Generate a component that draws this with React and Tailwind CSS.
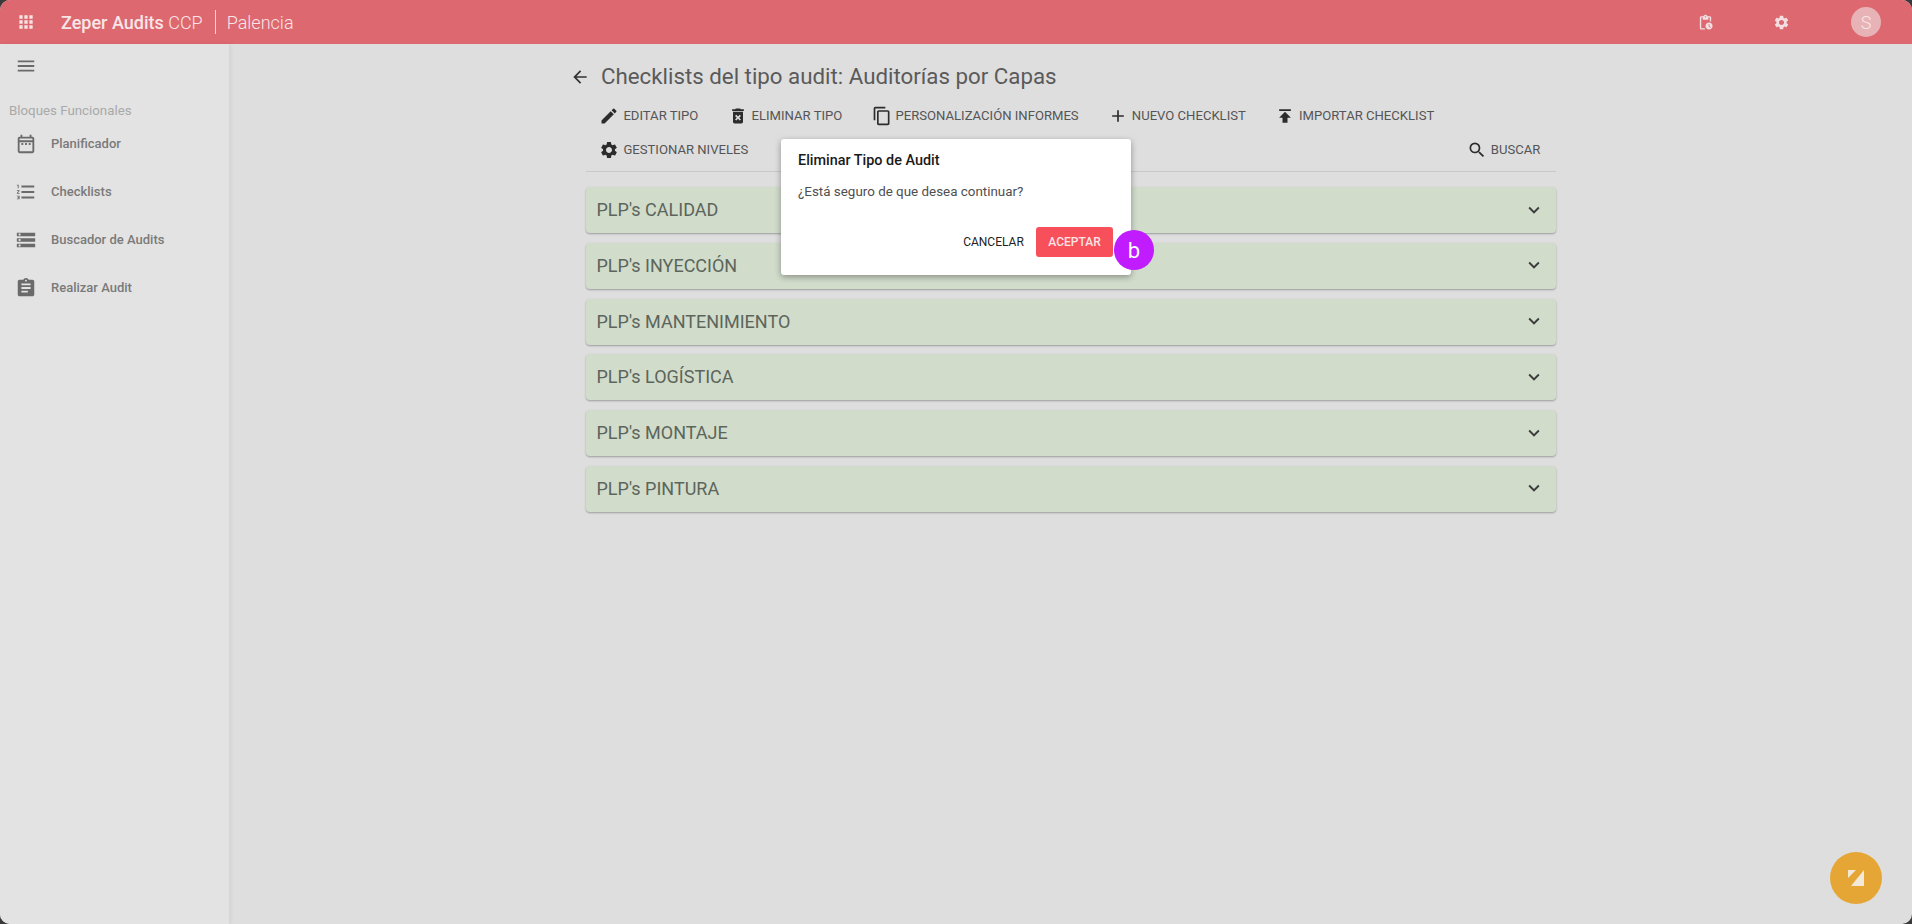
import React from "react";
import {
  MdApps, MdMenu, MdOutlineDateRange, MdFormatListNumbered, MdStorage, MdAssignment,
  MdEdit, MdDeleteForever, MdContentCopy, MdAdd, MdPublish, MdSettings, MdSearch,
  MdExpandMore, MdArrowBack, MdOutlinePendingActions,
} from "react-icons/md";

const nav = [
  [MdOutlineDateRange, "Planificador"],
  [MdFormatListNumbered, "Checklists"],
  [MdStorage, "Buscador de Audits"],
  [MdAssignment, "Realizar Audit"],
];
const row1 = [
  [MdEdit, "EDITAR TIPO"],
  [MdDeleteForever, "ELIMINAR TIPO"],
  [MdContentCopy, "PERSONALIZACIÓN INFORMES"],
  [MdAdd, "NUEVO CHECKLIST"],
  [MdPublish, "IMPORTAR CHECKLIST"],
];
const panels = ["PLP's CALIDAD", "PLP's INYECCIÓN", "PLP's MANTENIMIENTO", "PLP's LOGÍSTICA", "PLP's MONTAJE", "PLP's PINTURA"];

function ToolButton({ icon: Icon, label }) {
  return (
    <button className="flex h-[34px] items-center gap-[4px] px-[14.6px] text-[13.1px] text-[#555555]">
      <Icon className="h-[20px] w-[20px] text-[#2c2c2c]" />
      <span>{label}</span>
    </button>
  );
}

export default function App() {
  return (
    <div className="h-[924px] w-[1912px] overflow-hidden bg-[#3a3a3a] font-['Roboto',sans-serif]">
      <div className="relative flex h-full w-full flex-col overflow-hidden rounded-[10px] bg-[#dedede]">
        <header className="flex h-[44px] shrink-0 items-center bg-[#dd6870] text-white">
          <MdApps className="ml-[16px] h-[20px] w-[20px] text-[#f6e3e4]" />
          <div className="ml-[25px] text-[18px] text-[#f7e6e7]">
            <span className="font-medium">Zeper Audits</span> <span className="font-light">CCP</span>
          </div>
          <div className="ml-[12px] h-[24px] w-px bg-[#f4d5d7]" />
          <div className="ml-[11px] text-[18px] font-light text-[#f7e6e7]">Palencia</div>
          <div className="ml-auto flex items-center">
            <MdOutlinePendingActions className="h-[17px] w-[17px] text-[#f3dfe1]" />
            <MdSettings className="ml-[59px] h-[17px] w-[17px] text-[#f3dfe1]" />
            <div className="ml-[61px] mr-[31px] flex h-[30px] w-[30px] items-center justify-center rounded-full bg-[#e8b3b6] text-[18px] font-light text-[#f7e6e7]">S</div>
          </div>
        </header>
        <div className="flex min-h-0 flex-1">
          <aside className="w-[229px] shrink-0 bg-[#e3e3e3] shadow-[2px_0_4px_rgba(0,0,0,0.05)]">
            <div className="flex h-[44px] items-center pl-[15px]">
              <MdMenu className="h-[22px] w-[22px] text-[#6a6a6a]" />
            </div>
            <div className="mt-[14.5px] pl-[9px] text-[13.3px] leading-[16px] text-[#a9a9a9]">Bloques Funcionales</div>
            <nav className="mt-[1.5px]">
              {nav.map(([Icon, label]) => (
                <div key={label} className="flex h-[48px] items-center pl-[15px]">
                  <Icon className="h-[22px] w-[22px] text-[#6a6a6a]" />
                  <span className="ml-[14px] text-[13px] font-medium text-[#7a7a7a]">{label}</span>
                </div>
              ))}
            </nav>
          </aside>
          <main className="min-w-0 flex-1 pl-[357px] pr-[356px]">
            <div className="mt-[16px] flex h-[34px] items-center">
              <MdArrowBack className="ml-[-16px] h-[20px] w-[20px] text-[#333333]" />
              <h1 className="ml-[11px] text-[22.3px] text-[#5a5a5a]">Checklists del tipo audit: Auditorías por Capas</h1>
            </div>
            <div className="mt-[5px] ml-[-1.2px] flex flex-wrap">
              {row1.map(([I, l]) => <ToolButton key={l} icon={I} label={l} />)}
            </div>
            <div className="flex items-center justify-between border-b border-[#c8c8c8] pb-[4px]">
              <div className="ml-[-1.2px]"><ToolButton icon={MdSettings} label="GESTIONAR NIVELES" /></div>
              <div className="mr-[1px]"><ToolButton icon={MdSearch} label="BUSCAR" /></div>
            </div>
            <div className="mt-[15px] flex flex-col gap-[9.75px]">
              {panels.map((p) => (
                <div key={p} className="flex h-[46px] items-center justify-between rounded-[4px] bg-[#d1dccb] pb-[1px] pl-[10.5px] pr-[11px] shadow-[0_1px_2px_rgba(0,0,0,0.3)]">
                  <span className="text-[18px] text-[#5c655c]">{p}</span>
                  <MdExpandMore className="h-[22px] w-[22px] text-[#3c3c3c]" />
                </div>
              ))}
            </div>
          </main>
        </div>

        <div className="absolute left-[781px] top-[139px] flex h-[136px] w-[350px] flex-col rounded-[3px] bg-white px-[17px] pt-[12px] shadow-[0_2px_6px_rgba(0,0,0,0.35)]">
          <div className="text-[14.4px] font-medium leading-[20px] text-[#1a1a1a]">Eliminar Tipo de Audit</div>
          <div className="mt-[11px] text-[13.4px] leading-[20px] text-[#4f4f4f]">¿Está seguro de que desea continuar?</div>
          <div className="mt-[25px] flex justify-end gap-[4px] pr-[1px]">
            <button className="h-[30px] w-[77px] rounded-[3px] text-[12px] text-[#222222]">CANCELAR</button>
            <button className="h-[30px] w-[77px] rounded-[3px] bg-[#f7505a] text-[12px] font-medium text-[#fbe4e5]">ACEPTAR</button>
          </div>
        </div>
        <div className="absolute left-[1114px] top-[230px] flex h-[40px] w-[40px] items-center justify-center rounded-full bg-[#c01cff] text-[22px] text-white">b</div>
        <div className="absolute left-[1830px] top-[852px] flex h-[52px] w-[52px] items-center justify-center rounded-full bg-[#e6a635]">
          <svg viewBox="0 0 16 16" className="h-[16px] w-[16px]">
            <path d="M0 0h8L0 8z" fill="#f3e9d8" />
            <path d="M16 0v16H3z" fill="#f3e9d8" />
          </svg>
        </div>
      </div>
    </div>
  );
}
